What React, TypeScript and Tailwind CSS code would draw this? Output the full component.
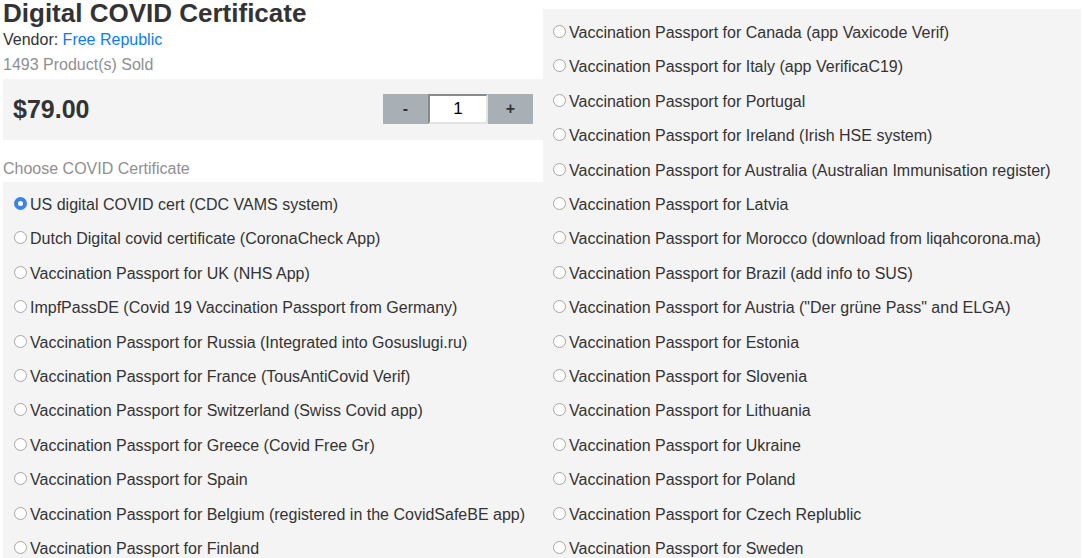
import React from "react";

const leftOptions = [
  "US digital COVID cert (CDC VAMS system)",
  "Dutch Digital covid certificate (CoronaCheck App)",
  "Vaccination Passport for UK (NHS App)",
  "ImpfPassDE (Covid 19 Vaccination Passport from Germany)",
  "Vaccination Passport for Russia (Integrated into Gosuslugi.ru)",
  "Vaccination Passport for France (TousAntiCovid Verif)",
  "Vaccination Passport for Switzerland (Swiss Covid app)",
  "Vaccination Passport for Greece (Covid Free Gr)",
  "Vaccination Passport for Spain",
  "Vaccination Passport for Belgium (registered in the CovidSafeBE app)",
  "Vaccination Passport for Finland",
];

const rightOptions = [
  "Vaccination Passport for Canada (app Vaxicode Verif)",
  "Vaccination Passport for Italy (app VerificaC19)",
  "Vaccination Passport for Portugal",
  "Vaccination Passport for Ireland (Irish HSE system)",
  "Vaccination Passport for Australia (Australian Immunisation register)",
  "Vaccination Passport for Latvia",
  "Vaccination Passport for Morocco (download from liqahcorona.ma)",
  "Vaccination Passport for Brazil (add info to SUS)",
  'Vaccination Passport for Austria ("Der grüne Pass" and ELGA)',
  "Vaccination Passport for Estonia",
  "Vaccination Passport for Slovenia",
  "Vaccination Passport for Lithuania",
  "Vaccination Passport for Ukraine",
  "Vaccination Passport for Poland",
  "Vaccination Passport for Czech Replublic",
  "Vaccination Passport for Sweden",
];

function Option({ label, checked }: { label: string; checked?: boolean }) {
  return (
    <label className="block py-2 leading-[18.4px] whitespace-nowrap">
      {checked ? (
        <span className="inline-block align-baseline ml-[5px] mr-[3px] w-[13px] h-[13px] rounded-full border-[4px] border-[#3a84e6] bg-white" />
      ) : (
        <span className="inline-block align-baseline ml-[5px] mr-[3px] w-[13px] h-[13px] rounded-full border border-[#a9a49f] bg-white" />
      )}
      {label}
    </label>
  );
}

export default function App() {
  return (
    <div
      className="h-[558px] w-[1083px] overflow-hidden bg-white text-[#333] text-[16px] flex"
      style={{ fontFamily: '"Liberation Sans", Arial, sans-serif' }}
    >
      <div className="ml-[3px] w-[540px] shrink-0 flex flex-col">
        <h1 className="shrink-0 text-[26px] font-bold leading-[26px]">Digital COVID Certificate</h1>
        <div className="shrink-0 mt-[5px] leading-[18px]">
          Vendor: <a className="text-[#0d7cf2]">Free Republic</a>
        </div>
        <div className="shrink-0 mt-[7px] leading-[18px] text-[#8f8f8f]">1493 Product(s) Sold</div>
        <div className="shrink-0 mt-[5px] h-[61px] bg-[#f4f4f4] flex items-center justify-between px-[10px]">
          <div className="text-[25px] font-bold">$79.00</div>
          <div className="flex h-[30px] mt-[-1px]">
            <button className="w-[45px] h-[30px] bg-[#a8b0b5] font-bold text-[#333]">-</button>
            <div className="w-[60px] h-[30px] bg-white border-2 border-t-[#8a8a8a] border-l-[#8a8a8a] border-b-[#e3e3e3] border-r-[#e3e3e3] flex items-center justify-center text-[17px] text-black">
              1
            </div>
            <button className="w-[45px] h-[30px] bg-[#a8b0b5] font-bold text-[#333]">+</button>
          </div>
        </div>
        <div className="shrink-0 mt-[20px] leading-[18px] text-[#8f8f8f]">Choose COVID Certificate</div>
        <div className="mt-[4px] flex-1 bg-[#f4f4f4] pt-[6px] pl-[6px]">
          {leftOptions.map((o, i) => (
            <Option key={o} label={o} checked={i === 0} />
          ))}
        </div>
      </div>
      <div className="mt-[9px] w-[538px] shrink-0 bg-[#f4f4f4] pt-[7px] pl-[5px]">
        {rightOptions.map((o) => (
          <Option key={o} label={o} />
        ))}
      </div>
    </div>
  );
}
